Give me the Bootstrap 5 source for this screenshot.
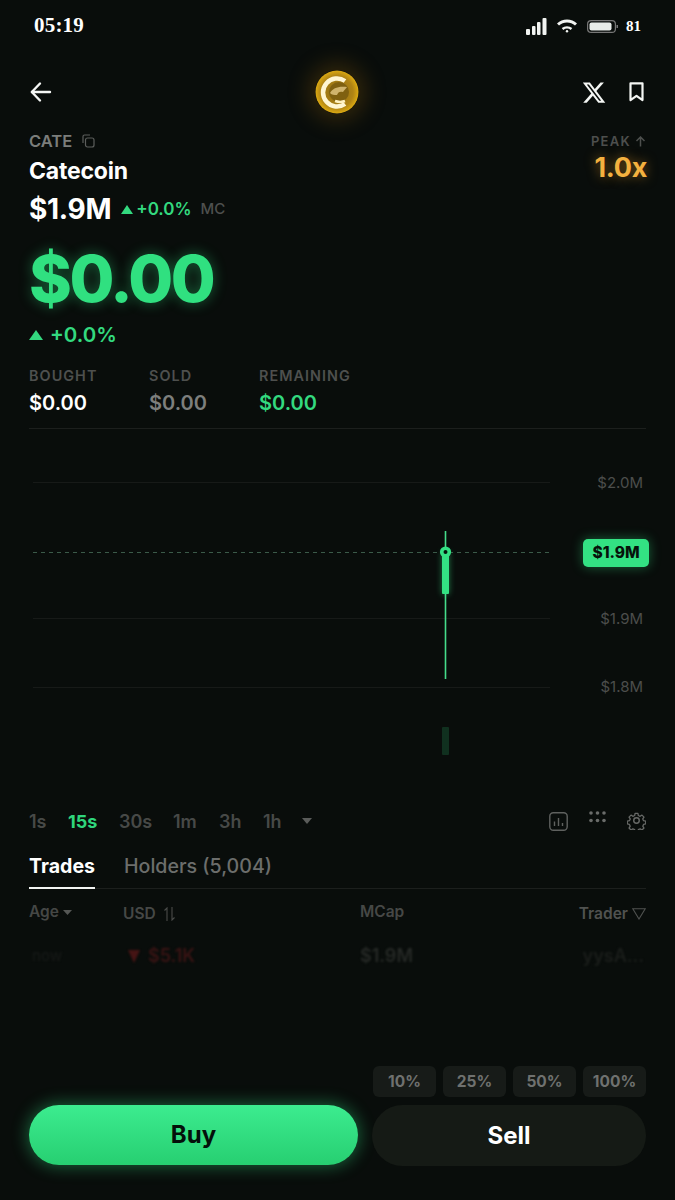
<!doctype html>
<html lang="en">
<head>
<meta charset="utf-8">
<title>Catecoin</title>
<link rel="stylesheet" href="https://cdn.jsdelivr.net/npm/bootstrap@5.3.0/dist/css/bootstrap.min.css">
<style>
html,body{background:#090d0b;}
body{font-family:Inter,"Liberation Sans",sans-serif;color:#fff;width:675px;height:1200px;overflow:hidden;}
.shell{height:1200px;display:flex;flex-direction:column;padding:0 29px;}
.statusbar{height:52px;padding:0 5px 0 5px;font-family:"Liberation Serif",serif;font-weight:700;}
.clock{font-size:21px;letter-spacing:.2px;}
.batt-num{font-size:15px;margin-left:-2px;}
.sbar-icons{gap:10px;}
.topnav{height:62px;padding-top:18px;}
.coinwrap{width:44px;height:44px;border-radius:50%;box-shadow:0 0 22px 6px rgba(170,110,10,.28);margin-left:38px;}
.xico{margin-right:3px;}
.bkm{margin-left:20px;margin-right:2px;}
.head{height:114px;}
.sym{font-size:16.5px;font-weight:600;color:#7b7d7b;line-height:20px;padding-top:17px;box-sizing:content-box;}
.copyi{margin-left:10px;}
.cname{font-size:23px;font-weight:700;line-height:28px;margin-top:6px;letter-spacing:-.2px;}
.mc{margin-top:7px;line-height:34px;}
.mc-val{font-size:28px;font-weight:700;letter-spacing:-.3px;}
.mc-pct{font-size:17px;font-weight:600;color:#33d97f;margin-left:3px;}
.mc-tri{margin-left:10px;}
.mc-lab{font-size:15px;font-weight:500;color:#4e504e;margin-left:9px;}
.peak{font-size:13px;font-weight:600;letter-spacing:1.3px;color:#4d4f4d;padding-top:17px;line-height:20px;}
.peakv{font-size:27px;font-weight:700;color:#f4b13f;line-height:32px;text-shadow:0 0 12px rgba(240,160,40,.55);letter-spacing:-.3px;margin-top:1px;margin-right:-1px;}
.bigp{font-size:65px;font-weight:800;color:#30e080;line-height:84px;letter-spacing:-2.5px;text-shadow:0 0 14px rgba(48,224,128,.4);margin-top:9px;height:85px;}
.bigc{font-size:20.5px;font-weight:600;color:#33d97f;line-height:26px;}
.bigt{margin-right:7px;}
.stats{margin-top:15px;height:66px;border-bottom:1px solid #1c1f1d;}
.stat-l{font-size:14.4px;font-weight:600;letter-spacing:1.05px;color:#4e504e;line-height:20px;margin-top:3px;}
.stat-v{font-size:20px;font-weight:600;line-height:30px;margin-top:2px;}
.stat-a{width:120px;}
.stat-b{width:110px;}
.v-grey{color:#7d7f7d;}
.v-green{color:#33d97f;}
.chartbox{height:360px;position:relative;margin:0 -29px;}
.chartbox svg{display:block;}
.axis{position:absolute;right:32px;transform:translateY(-50%);font-size:15px;color:#4c4e4c;line-height:20px;}
.ax1{top:54px;}
.ax2{top:190px;}
.ax3{top:258px;}
.pricetag{position:absolute;left:583px;top:110px;width:66px;height:28px;background:#33e183;border-radius:5px;color:#06120b;font-size:15.5px;font-weight:800;text-align:center;line-height:28px;box-shadow:0 0 12px rgba(51,225,131,.4);}
.frames{height:34px;font-size:18px;font-weight:600;color:#474947;margin-top:15px;}
.frames .on{color:#2fd57c;font-weight:700;}
.f1{width:39px;}.f2{width:51px;}.f3{width:54px;}.f4{width:46px;}.f5{width:44px;}.f6{width:39px;}
.charti{margin-left:0;}
.dotsi{margin-left:21px;margin-top:-8px;}
.geari{margin-left:21px;margin-top:-1px;}
.tabs{height:37px;margin-top:14px;border-bottom:1px solid #1c1f1d;font-size:19.6px;line-height:28px;}
.tab-a{font-weight:700;color:#fff;border-bottom:2px solid #f2f4f2;height:37px;width:66px;}
.tab-b{font-weight:500;color:#6c6e6c;margin-left:29px;}
.thead{height:44px;position:relative;font-size:15.5px;font-weight:600;color:#464846;}
.tcell{position:absolute;line-height:20px;}
.c-age{left:0;top:13px;color:#454745;}
.c-usd{left:94px;top:15px;}
.c-mc{left:331px;top:13px;}
.c-tr{right:0;top:15px;color:#505250;}
.trow{height:46px;position:relative;font-size:18px;font-weight:600;filter:blur(1px);}
.r-age{left:3px;top:13px;font-size:15px;font-weight:500;color:#161917;}
.r-usd{left:99px;top:13px;color:#3b1414;}
.r-mc{left:331px;top:13px;color:#262926;}
.r-tr{right:2px;top:13px;color:#1b1e1b;}
.pcts{margin-top:auto;height:31px;gap:7px;justify-content:flex-end;margin-bottom:8px;}
.pctb{height:31px;background:#171b18;border:0;border-radius:6px;color:#6f716f;font-size:15.5px;font-weight:700;padding:0;line-height:31px;width:63px;}
.actions{height:61px;margin-bottom:34px;gap:14px;}
.btn-buy{width:329px;height:60px;border:0;border-radius:30px;background:linear-gradient(#3cec8f,#27cf71);color:#04100a;font-size:24px;font-weight:700;box-shadow:0 0 16px 2px rgba(51,225,131,.38);}
.btn-sell{width:274px;height:61px;border:0;border-radius:31px;background:#151a15;color:#fff;font-size:24px;font-weight:700;}
.btn-buy:hover{background:linear-gradient(#3cec8f,#27cf71);color:#04100a;}
.btn-sell:hover{background:#151a15;color:#fff;}
</style>
</head>
<body>
<div class="shell">
  <div class="statusbar d-flex justify-content-between align-items-center">
    <span class="clock">05:19</span>
    <span class="d-flex align-items-center sbar-icons">
      <svg width="21" height="17" viewBox="0 0 21 17" fill="#f1f3f1"><rect x="0" y="11" width="4" height="6" rx="1"/><rect x="6" y="8" width="3.5" height="9" rx="1"/><rect x="11" y="4" width="3.5" height="13" rx="1"/><rect x="16.5" y="0" width="4" height="17" rx="1"/></svg>
      <svg width="20" height="14" viewBox="0 0 20 14" fill="none" stroke="#f1f3f1" stroke-width="3"><path d="M1 5.500C6 .8 14 .8 19 5.500"/><path d="M5.500 10c2.600-2 6.400-2 9 0" stroke-width="2.500"/><circle cx="10" cy="12.300" r="1.200" fill="#f1f3f1" stroke="none"/></svg>
      <svg width="31" height="13" viewBox="0 0 31 13"><rect x=".6" y=".6" width="27.800" height="11.800" rx="3.500" fill="none" stroke="#777" stroke-width="1.200"/><rect x="2.500" y="2.500" width="22" height="8" rx="2" fill="#e8ece9"/><rect x="29.500" y="5" width="1.500" height="3" fill="#777"/></svg>
      <span class="batt-num">81</span>
    </span>
  </div>

  <div class="topnav d-flex justify-content-between align-items-center">
    <svg width="24" height="22" viewBox="0 0 24 22" fill="none" stroke="#f4f6f4" stroke-width="2.400" stroke-linecap="round" stroke-linejoin="round"><path d="M21 11H3"/><path d="M11 2.500 2.800 11l8.200 8.500"/></svg>
    <div class="coinwrap">
      <svg width="44" height="44" viewBox="0 0 44 44">
        <defs><radialGradient id="cg" cx="50%" cy="50%" r="50%"><stop offset="0" stop-color="#8a6a14"/><stop offset=".75" stop-color="#b08414"/><stop offset="1" stop-color="#dcaa12"/></radialGradient></defs>
        <circle cx="22" cy="22" r="21.500" fill="url(#cg)"/>
        <path d="M30 11A14 14 0 1 0 30 34" fill="none" stroke="#fff6d2" stroke-width="4.500"/>
        <circle cx="24" cy="22" r="10" fill="#7f6010"/>
        <path d="M15 23c3-5 8-7 17-6-1 2-3 3-4 5-3-1-5 0-6 3-3 0-5 0-7-2z" fill="#cfb36c"/>
        <path d="M20 31c3 1 6 1.500 10 0" fill="none" stroke="#fff1c0" stroke-width="2.500"/>
      </svg>
    </div>
    <span class="d-flex align-items-center">
      <svg class="xico" width="23" height="23" viewBox="0 0 24 24" fill="#f4f6f4"><path d="M18.240 1.500h3.600l-7.860 9 9.250 12.250h-7.240l-5.670-7.420-6.490 7.420H.22l8.410-9.610L-.25 1.500h7.420l5.130 6.780zm-1.260 19.100h2L6.100 3.550H3.950z"/></svg>
      <svg class="bkm" width="15" height="20" viewBox="0 0 15 20" fill="none" stroke="#f4f6f4" stroke-width="2.200" stroke-linejoin="round"><path d="M1.500 1.300h12v16.800l-6-4.300-6 4.300z"/></svg>
    </span>
  </div>

  <div class="head d-flex justify-content-between">
    <div>
      <div class="sym d-flex align-items-center">CATE
        <svg class="copyi" width="13" height="14" viewBox="0 0 13 14" fill="none" stroke="#5c5e5c" stroke-width="1.200"><rect x="3.500" y="4" width="8.500" height="9" rx="2"/><path d="M1 9V2.500A1.500 1.500 0 0 1 2.500 1H8"/></svg>
      </div>
      <div class="cname">Catecoin</div>
      <div class="mc d-flex align-items-center">
        <span class="mc-val">$1.9M</span>
        <svg class="mc-tri" width="12" height="9" viewBox="0 0 12 9" fill="#33d97f"><path d="M6 0 12 9H0z"/></svg>
        <span class="mc-pct">+0.0%</span>
        <span class="mc-lab">MC</span>
      </div>
    </div>
    <div class="text-end">
      <div class="peak d-flex align-items-center justify-content-end">PEAK
        <svg class="ms-1" width="11" height="11" viewBox="0 0 11 11" fill="none" stroke="#4d4f4d" stroke-width="1.500"><path d="M5.500 10.500V1M1.500 5l4-4 4 4"/></svg>
      </div>
      <div class="peakv">1.0x</div>
    </div>
  </div>

  <div class="bigp">$0.00</div>
  <div class="bigc d-flex align-items-center">
    <svg class="bigt" width="14" height="10" viewBox="0 0 14 10" fill="#33d97f"><path d="M7 0 14 10H0z"/></svg>+0.0%
  </div>

  <div class="stats d-flex">
    <div class="stat-a"><div class="stat-l">BOUGHT</div><div class="stat-v">$0.00</div></div>
    <div class="stat-b"><div class="stat-l">SOLD</div><div class="stat-v v-grey">$0.00</div></div>
    <div><div class="stat-l">REMAINING</div><div class="stat-v v-green">$0.00</div></div>
  </div>

  <div class="chartbox">
    <svg width="675" height="360" viewBox="0 0 675 360">
      <defs><filter id="gl" x="-200%" y="-20%" width="500%" height="140%"><feGaussianBlur stdDeviation="3"/></filter></defs>
      <g stroke="#171a18" stroke-width="1">
        <path d="M33 53.500H550"/><path d="M33 189.500H550"/><path d="M33 258.500H550"/>
      </g>
      <path d="M33 123.500H550" stroke="#3b5a49" stroke-width="1" stroke-dasharray="4 4"/>
      <rect x="442" y="123" width="7" height="42" fill="#33e183" filter="url(#gl)" opacity=".5"/>
      <path d="M445.500 102V250" stroke="#45dc8b" stroke-width="1.600"/>
      <rect x="442" y="123" width="7" height="42" rx="1" fill="#33e183"/>
      <circle cx="445.500" cy="123" r="3.800" fill="#06140c" stroke="#33e183" stroke-width="3.600"/>
      <rect x="442" y="298" width="7" height="28" rx="1" fill="#10301f"/>
    </svg>
    <span class="axis ax1">$2.0M</span>
    <span class="axis ax2">$1.9M</span>
    <span class="axis ax3">$1.8M</span>
    <span class="pricetag">$1.9M</span>
  </div>

  <div class="frames d-flex align-items-center justify-content-between">
    <span class="d-flex align-items-center">
      <span class="f1">1s</span>
      <span class="on f2">15s</span>
      <span class="f3">30s</span>
      <span class="f4">1m</span>
      <span class="f5">3h</span>
      <span class="f6">1h</span>
      <svg width="10" height="6" viewBox="0 0 10 6" fill="#5a5c5a"><path d="M0 0h10L5 6z"/></svg>
    </span>
    <span class="d-flex align-items-center">
      <svg class="charti" width="19" height="19" viewBox="0 0 19 19" fill="none" stroke="#5f615f" stroke-width="1.400"><rect x=".8" y=".8" width="17.400" height="17.400" rx="3.500"/><path d="M5.500 9.500v4.500M9.500 6v8M13.500 11v3"/></svg>
      <svg class="dotsi" width="17" height="12" viewBox="0 0 17 12" fill="#6a6c6a"><circle cx="2" cy="2" r="1.800"/><circle cx="8.500" cy="2" r="1.800"/><circle cx="15" cy="2" r="1.800"/><circle cx="2" cy="9.500" r="1.800"/><circle cx="8.500" cy="9.500" r="1.800"/><circle cx="15" cy="9.500" r="1.800"/></svg>
      <svg class="geari" width="19" height="19" viewBox="0 0 24 24" fill="none" stroke="#686a68" stroke-width="1.800" stroke-linejoin="round"><circle cx="12" cy="12" r="3.500"/><path d="M10 2h4l.6 3 2.500 1.100 2.600-1.700 2.800 2.800-1.700 2.600 1.100 2.500 3 .6v4l-3 .6-1.100 2.500 1.700 2.600-2.800 2.800-2.600-1.700-2.500 1.100-.6 3h-4l-.6-3-2.500-1.100-2.600 1.700-2.800-2.800 1.700-2.600-1.100-2.500-3-.6v-4l3-.6 1.100-2.500-1.700-2.600 2.800-2.800 2.600 1.700 2.500-1.100z" transform="translate(1.200 1.200) scale(.9)"/></svg>
    </span>
  </div>

  <div class="tabs d-flex">
    <div class="tab-a">Trades</div>
    <div class="tab-b">Holders (5,004)</div>
  </div>

  <div class="thead">
    <span class="tcell c-age d-flex align-items-center">Age<svg class="ms-1" width="9" height="5" viewBox="0 0 9 5" fill="#555755"><path d="M0 0h9L4.500 5z"/></svg></span>
    <span class="tcell c-usd d-flex align-items-center">USD<svg class="ms-2" width="11" height="14" viewBox="0 0 11 14" fill="none" stroke="#4a4c4a" stroke-width="1.100"><path d="M3 14V1L.5 3.500M8 0v13l2.500-2.500"/></svg></span>
    <span class="tcell c-mc">MCap</span>
    <span class="tcell c-tr d-flex align-items-center">Trader<svg class="ms-1" width="14" height="12" viewBox="0 0 14 12" fill="none" stroke="#505250" stroke-width="1.100"><path d="M.8.800h12.400L7 11z"/></svg></span>
  </div>
  <div class="trow">
    <span class="tcell r-age">now</span>
    <span class="tcell r-usd d-flex align-items-center"><svg class="me-2" width="12" height="13" viewBox="0 0 12 13" fill="#451414"><path d="M0 0h12L6 13z"/></svg>$5.1K</span>
    <span class="tcell r-mc">$1.9M</span>
    <span class="tcell r-tr">yysA...</span>
  </div>

  <div class="pcts d-flex">
    <button class="btn pctb">10%</button>
    <button class="btn pctb">25%</button>
    <button class="btn pctb">50%</button>
    <button class="btn pctb">100%</button>
  </div>
  <div class="actions d-flex">
    <button class="btn btn-buy">Buy</button>
    <button class="btn btn-sell">Sell</button>
  </div>
</div>
<script src="https://cdn.jsdelivr.net/npm/bootstrap@5.3.0/dist/js/bootstrap.bundle.min.js"></script>
</body>
</html>
